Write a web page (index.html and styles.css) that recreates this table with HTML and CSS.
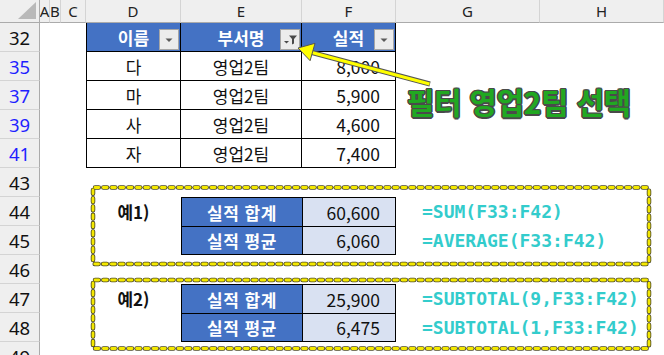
FILE: index.html
```html
<!DOCTYPE html>
<html lang="ko">
<head>
<meta charset="utf-8">
<title>필터 영업2팀</title>
<link rel="stylesheet" href="styles.css">
</head>
<body>
<div class="page">
  <div class="sheet">
    <div class="corner"><span class="tri"></span></div>
    <div class="ch">A</div><div class="ch">B</div><div class="ch">C</div><div class="ch">D</div><div class="ch">E</div><div class="ch">F</div><div class="ch">G</div><div class="ch">H</div>

    <div class="rh">32</div><div class="c"></div><div class="c"></div><div class="c"></div>
    <div class="th first">이름<span class="fbtn"><svg viewBox="0 0 20 21" width="20" height="21"><polygon points="6.5,9.5 13.5,9.5 10,13" fill="#5a5a5a"/></svg></span></div>
    <div class="th">부서명<span class="fbtn"><svg viewBox="0 0 20 21" width="20" height="21"><polygon points="9,6.5 17,6.5 14,10 14,14.5 12,15.5 12,10" fill="#4a4a4a"/><polygon points="4,12 9,12 6.5,14.5" fill="#4a4a4a"/></svg></span></div>
    <div class="th last">실적<span class="fbtn"><svg viewBox="0 0 20 21" width="20" height="21"><polygon points="6.5,9.5 13.5,9.5 10,13" fill="#5a5a5a"/></svg></span></div>
    <div class="c"></div><div class="c"></div>

    <div class="rh blue">35</div><div class="c"></div><div class="c"></div><div class="c"></div>
    <div class="td first">다</div><div class="td">영업2팀</div><div class="td num last">8,000</div>
    <div class="c"></div><div class="c"></div>

    <div class="rh blue">37</div><div class="c"></div><div class="c"></div><div class="c"></div>
    <div class="td first">마</div><div class="td">영업2팀</div><div class="td num last">5,900</div>
    <div class="c"></div><div class="c"></div>

    <div class="rh blue">39</div><div class="c"></div><div class="c"></div><div class="c"></div>
    <div class="td first">사</div><div class="td">영업2팀</div><div class="td num last">4,600</div>
    <div class="c"></div><div class="c"></div>

    <div class="rh blue">41</div><div class="c"></div><div class="c"></div><div class="c"></div>
    <div class="td first bottom">자</div><div class="td bottom">영업2팀</div><div class="td num last bottom">7,400</div>
    <div class="c"></div><div class="c"></div>

    <div class="rh">43</div><div class="c"></div><div class="c"></div><div class="c"></div><div class="c"></div><div class="c"></div><div class="c"></div><div class="c"></div><div class="c"></div>

    <div class="rh">44</div><div class="c"></div><div class="c"></div><div class="c"></div>
    <div class="lbl">예1)</div>
    <div class="kb">실적 합계</div><div class="kv">60,600</div>
    <div class="fx">=SUM(F33:F42)</div><div class="c"></div>

    <div class="rh">45</div><div class="c"></div><div class="c"></div><div class="c"></div>
    <div class="c"></div>
    <div class="kb bottom">실적 평균</div><div class="kv bottom">6,060</div>
    <div class="fx">=AVERAGE(F33:F42)</div><div class="c"></div>

    <div class="rh">46</div><div class="c"></div><div class="c"></div><div class="c"></div><div class="c"></div><div class="c"></div><div class="c"></div><div class="c"></div><div class="c"></div>

    <div class="rh">47</div><div class="c"></div><div class="c"></div><div class="c"></div>
    <div class="lbl">예2)</div>
    <div class="kb">실적 합계</div><div class="kv">25,900</div>
    <div class="fx">=SUBTOTAL(9,F33:F42)</div><div class="c"></div>

    <div class="rh">48</div><div class="c"></div><div class="c"></div><div class="c"></div>
    <div class="c"></div>
    <div class="kb bottom">실적 평균</div><div class="kv bottom">6,475</div>
    <div class="fx">=SUBTOTAL(1,F33:F42)</div><div class="c"></div>

    <div class="rh">49</div><div class="c"></div><div class="c"></div><div class="c"></div><div class="c"></div><div class="c"></div><div class="c"></div><div class="c"></div><div class="c"></div>
  </div>

  <svg class="shapes" width="664" height="355" viewBox="0 0 664 355">
    <g fill="none" stroke-linecap="round">
      <rect x="93" y="187.5" width="556" height="76.5" rx="2" stroke="#4d4a28" stroke-width="4.5" stroke-dasharray="3.8 4.5"/>
      <rect x="93" y="187.5" width="556" height="76.5" rx="2" stroke="#f4e800" stroke-width="2.8" stroke-dasharray="3.8 4.5"/>
      <rect x="93" y="280" width="556" height="68.5" rx="2" stroke="#4d4a28" stroke-width="4.5" stroke-dasharray="3.8 4.5"/>
      <rect x="93" y="280" width="556" height="68.5" rx="2" stroke="#f4e800" stroke-width="2.8" stroke-dasharray="3.8 4.5"/>
    </g>
    <line x1="430" y1="84" x2="310" y2="52" stroke="#555" stroke-width="5"/>
    <line x1="429.5" y1="84" x2="310" y2="52" stroke="#ffff00" stroke-width="3"/>
    <polygon points="298,48 315,43.3 310.1,60.7" fill="#ffff00" stroke="#555" stroke-width="1" stroke-linejoin="round"/>
  </svg>

  <div class="note">필터 영업2팀 선택</div>
</div>
</body>
</html>
```

FILE: styles.css
```css
html, body {
  margin: 0;
  padding: 0;
  background: #ffffff;
  overflow: hidden;
}

.page {
  position: relative;
  width: 664px;
  height: 355px;
  overflow: hidden;
  font-family: "Noto Sans CJK KR", "Noto Sans", sans-serif;
}

.sheet {
  display: grid;
  grid-template-columns: 40px 10px 11px 25px 95px 121px 94px 144px 124px;
  grid-template-rows: 23px repeat(12, 29px);
}

.sheet > div {
  box-sizing: border-box;
  display: flex;
  align-items: center;
  justify-content: center;
  white-space: nowrap;
  min-width: 0;
}

.corner {
  position: relative;
  background: #efefef;
  border-right: 1px solid #ababab;
  border-bottom: 1px solid #ababab;
}

.corner .tri {
  position: absolute;
  right: 3px;
  bottom: 3px;
  width: 0;
  height: 0;
  border-left: 18px solid transparent;
  border-bottom: 17px solid #b9b9b9;
}

.ch {
  background: #efefef;
  border-right: 1px solid #d4d4d4;
  border-bottom: 1px solid #ababab;
  font-family: "Noto Sans", "Noto Sans CJK KR", sans-serif;
  font-size: 15px;
  color: #222;
  overflow: visible;
}

.rh {
  background: #efefef;
  border-right: 1px solid #ababab;
  border-bottom: 1px solid #d4d4d4;
  font-family: "Noto Sans", "Noto Sans CJK KR", sans-serif;
  font-size: 18.5px;
  color: #111;
  padding-top: 1px;
}

.rh.blue {
  color: #1f1fff;
}

.th {
  position: relative;
  background: #4472c4;
  color: #ffffff;
  font-weight: 700;
  font-size: 17px;
  border-right: 1px solid #000;
  border-bottom: 1px solid #000;
}

.th.first {
  border-left: 1px solid #000;
}

.fbtn {
  position: absolute;
  right: 1px;
  bottom: 1px;
  width: 20px;
  height: 21px;
  box-sizing: border-box;
  background: #ececec;
  border: 1px solid #a6a6a6;
  display: flex;
}

.fbtn svg {
  position: absolute;
  left: -1px;
  top: -1px;
}

.td {
  font-size: 17px;
  color: #111;
  border-right: 1px solid #000;
  border-bottom: 1px solid #000;
}

.td.first {
  border-left: 1px solid #000;
}

.num {
  justify-content: flex-end !important;
  padding-right: 15px;
  font-size: 17.5px;
}

.lbl {
  font-size: 17px;
  font-weight: 700;
  color: #111;
}

.kb {
  background: #4472c4;
  color: #ffffff;
  font-weight: 700;
  font-size: 17px;
  border-left: 1px solid #000;
  border-top: 1px solid #000;
  letter-spacing: 0.5px;
}

.kv {
  background: #d9e1f2;
  color: #111;
  font-size: 17.5px;
  justify-content: flex-end !important;
  padding-right: 15px;
  border-left: 1px solid #000;
  border-top: 1px solid #000;
  border-right: 1px solid #000;
}

.kb.bottom, .kv.bottom {
  border-bottom: 1px solid #000;
}

.fx {
  justify-content: flex-start !important;
  padding-left: 26px;
  font-family: "DejaVu Sans Mono", monospace;
  font-weight: 700;
  font-size: 18px;
  color: #33cccc;
  overflow: visible;
}

.shapes {
  position: absolute;
  left: 0;
  top: 0;
  pointer-events: none;
}

.note {
  position: absolute;
  left: 407px;
  top: 80px;
  font-size: 29.5px;
  font-weight: 700;
  color: #21a821;
  white-space: nowrap;
  text-shadow:
    1.5px 0 0 #4a4a4a, -1.5px 0 0 #4a4a4a, 0 1.5px 0 #4a4a4a, 0 -1.5px 0 #4a4a4a,
    1px 1px 0 #4a4a4a, -1px 1px 0 #4a4a4a, 1px -1px 0 #4a4a4a, -1px -1px 0 #4a4a4a;
}
```
